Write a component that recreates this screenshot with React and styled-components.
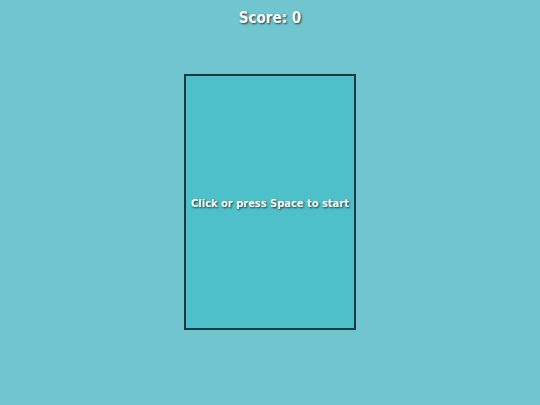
import React from 'react';
import styled, { createGlobalStyle } from 'styled-components';

const GlobalStyle = createGlobalStyle`
  html, body {
    margin: 0;
    padding: 0;
    background: #70c5ce;
    font-family: "DejaVu Sans Condensed", "DejaVu Sans", Verdana, sans-serif;
    font-stretch: condensed;
  }
`;

const Page = styled.div`
  width: 540px;
  height: 405px;
  display: flex;
  flex-direction: column;
  align-items: center;
`;

const Score = styled.div`
  margin-top: 8px;
  line-height: 20px;
  font-size: 15px;
  font-weight: bold;
  color: #fff;
  text-shadow: 1px 1px 2px rgba(0, 0, 0, 0.7);
`;

const Board = styled.div`
  margin-top: 46px;
  width: 168px;
  height: 252px;
  border: 2px solid #113a40;
  background: #4ec0ca;
  display: flex;
  align-items: center;
  justify-content: center;
`;

const Message = styled.div`
  margin-top: 3px;
  font-size: 11px;
  font-weight: bold;
  color: #fff;
  white-space: nowrap;
  text-shadow: 1px 1px 2px rgba(0, 0, 0, 0.7);
`;

export default function App() {
  return (
    <Page>
      <GlobalStyle />
      <Score>Score: 0</Score>
      <Board>
        <Message>Click or press Space to start</Message>
      </Board>
    </Page>
  );
}
